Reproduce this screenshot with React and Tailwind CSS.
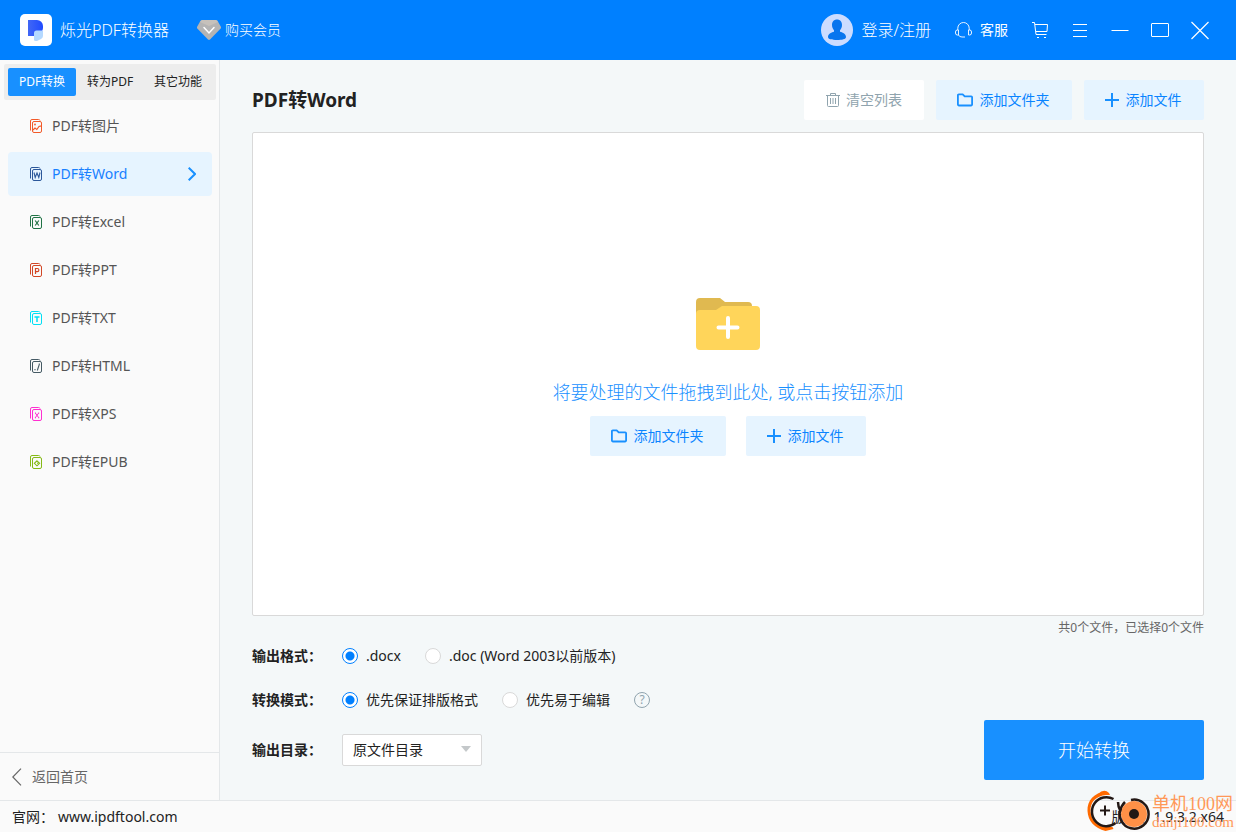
import { useState } from "react";

const NAV = [
  { label: "PDF转图片", color: "#f25a29", glyph: "image" },
  { label: "PDF转Word", color: "#2b579a", glyph: "word" },
  { label: "PDF转Excel", color: "#207245", glyph: "excel" },
  { label: "PDF转PPT", color: "#d24726", glyph: "ppt" },
  { label: "PDF转TXT", color: "#00e0f5", glyph: "txt" },
  { label: "PDF转HTML", color: "#455a64", glyph: "html" },
  { label: "PDF转XPS", color: "#ff2fd0", glyph: "xps" },
  { label: "PDF转EPUB", color: "#85b916", glyph: "epub" },
];

const GLYPHS = {
  image: (
    <>
      <circle cx="5" cy="5.500" r="0.9" fill="currentColor" stroke="none" />
      <path d="M3 11l2-2 1.800 1.500L9 7.500l2.500-.7" strokeWidth="1.200" />
    </>
  ),
  word: <path d="M4 5.500l1.200 5 1.800-4.500 1.800 4.500 1.200-5" strokeWidth="1.100" />,
  excel: <path d="M5.200 5.500l3.600 5M8.800 5.500l-3.600 5" strokeWidth="1.200" />,
  ppt: <path d="M5.500 11V5.500h1.800a1.500 1.500 0 0 1 0 3.200H5.500" strokeWidth="1.200" />,
  txt: <path d="M4.500 6h5M7 6v5" strokeWidth="1.500" />,
  html: <path d="M9.300 4.500v1L7.300 11.500M5 10v1.200" strokeWidth="1.100" />,
  xps: <path d="M5 6h1M8.200 6h1M5.300 6l3.500 4.800M8.700 6l-3.500 4.800M5 10.800h1M8.200 10.800h1" />,
  epub: <path d="M7 5.800l2.600 2.500L7 10.800 4.400 8.300zM7 8.300h1.300" strokeWidth="1.100" />,
};

function DocIcon({ glyph, color }) {
  return (
    <svg width="12" height="14" viewBox="0 0 12 14" fill="none" stroke="currentColor" strokeWidth="1" style={{ color }} aria-hidden="true">
      <path d="M.5 11.500V2A1.500 1.500 0 0 1 2 .5h6.500A1.500 1.500 0 0 1 10 1.500" />
      <rect x="2.500" y="2.500" width="9" height="11" rx="1.500" />
      {GLYPHS[glyph]}
    </svg>
  );
}

function FolderIcon() {
  return (
    <svg width="16" height="14" viewBox="0 0 16 14" fill="none" stroke="#1890ff" strokeWidth="1.800" strokeLinejoin="round" aria-hidden="true">
      <path d="M.9 11.600V2.200q0-.9.9-.9h3.900l2 2h6.500q.9 0 .9.900v7.400q0 .9-.9.900H1.800q-.9 0-.9-.9z" />
    </svg>
  );
}

function PlusIcon() {
  return (
    <svg width="14" height="14" viewBox="0 0 14 14" stroke="#1890ff" strokeWidth="2" aria-hidden="true">
      <path d="M7 0v14M0 7h14" />
    </svg>
  );
}

function AddButtons({ gap }) {
  const base = "flex h-10 items-center justify-center rounded-xs bg-[#e6f4ff] pr-0.5 text-sm text-[#0a84ff]";
  return (
    <div className={`flex ${gap}`}>
      <button type="button" className={`${base} w-34 gap-[7px]`}>
        <FolderIcon />
        添加文件夹
      </button>
      <button type="button" className={`${base} w-30 gap-[7px]`}>
        <PlusIcon />
        添加文件
      </button>
    </div>
  );
}

function TitleBar() {
  return (
    <header className="flex h-15 shrink-0 items-center bg-[#0080ff] pr-7 pl-5 font-light text-white">
      <svg width="32" height="32" viewBox="0 0 32 32" aria-hidden="true">
        <defs>
          <linearGradient id="mark" x1="0" y1="0" x2="1" y2="0">
            <stop offset="0" stopColor="#4167f5" />
            <stop offset="1" stopColor="#1f4bff" />
          </linearGradient>
        </defs>
        <rect width="32" height="32" rx="5" fill="#fff" />
        <path d="M8 6h9a6 6 0 0 1 6 6v2a6 6 0 0 1-6 6l-3 2H8z" fill="url(#mark)" />
        <path d="M14 26v-7q0-2.500 2.500-2.500H23v5.500q0 2-2 3l-3 1.500q-1 .5-2 .5-2 0-2-1z" fill="#b5d9ff" />
      </svg>
      <h1 className="ml-2 text-base font-light">烁光PDF转换器</h1>
      <button type="button" className="ml-7 flex items-center gap-1 text-sm">
        <svg width="24" height="20" viewBox="0 0 24 20" aria-hidden="true">
          <path d="M5 0h14q1 0 1.500.8L24 7q.3.800-.3 1.500L13 19.500q-1 .8-2 0L.3 8.500Q-.3 7.800 0 7L3.500.8Q4 0 5 0z" fill="#b4b4b4" />
          <path d="M5 0h14l2 2-9 4-9-4z" fill="#c6c1bb" />
          <path d="M7 7.500l5 5.500 5-5.500" fill="none" stroke="#fff" strokeWidth="1.500" strokeLinecap="round" />
        </svg>
        购买会员
      </button>
      <div className="ml-auto flex items-center">
        <button type="button" className="flex items-center gap-2 text-base">
          <svg width="32" height="32" viewBox="0 0 32 32" aria-hidden="true">
            <circle cx="16" cy="16" r="16" fill="#ccdcff" />
            <path d="M16 5.500c3 0 5 2.200 5 5.500 0 2.500-1 4-2 5.200v1.600c3 .9 6 2.200 6 5.200 0 2.300-4 3-9 3s-9-.7-9-3c0-3 3-4.300 6-5.200v-1.600c-1-1.200-2-2.700-2-5.200 0-3.300 2-5.500 5-5.500z" fill="#0875ee" />
          </svg>
          登录/注册
        </button>
        <button type="button" className="ml-6 flex items-center gap-2 text-sm font-normal">
          <svg width="17" height="16" viewBox="0 0 17 16" fill="none" stroke="#fff" strokeWidth="0.900" aria-hidden="true">
            <path d="M2.800 8V6.200a5.700 5.700 0 0 1 11.400 0V8M3.500 8H2.300Q.5 8 .5 10v1q0 2 1.800 2h1.200zM13.500 8h1.200q1.800 0 1.800 2v1q0 2-1.800 2h-1.200zM3.500 13q.8 2 3.500 2h3" />
          </svg>
          客服
        </button>
        <div className="ml-6 flex items-center gap-6">
          <button type="button" aria-label="购物车">
            <svg width="16" height="16" viewBox="0 0 16 16" fill="none" stroke="#fff" aria-hidden="true">
              <path d="M0 .5h2.500l1.500 12h10.500M3 2.500h12.500l-.5 7H4M5 15.500h2M12 15.500h2" />
            </svg>
          </button>
          <button type="button" aria-label="菜单">
            <svg width="16" height="16" viewBox="0 0 16 16" stroke="#fff" aria-hidden="true">
              <path d="M1 2.500h14M1 8.500h14M1 14.500h14" />
            </svg>
          </button>
          <button type="button" aria-label="最小化">
            <svg width="16" height="16" viewBox="0 0 16 16" stroke="#fff" className="overflow-visible" aria-hidden="true">
              <path d="M-.5 8.500h17" />
            </svg>
          </button>
          <button type="button" aria-label="最大化">
            <svg width="16" height="16" viewBox="0 0 16 16" fill="none" stroke="#fff" className="overflow-visible" aria-hidden="true">
              <rect x="-.5" y="1.500" width="17" height="13" rx=".5" />
            </svg>
          </button>
          <button type="button" aria-label="关闭">
            <svg width="16" height="16" viewBox="0 0 16 16" stroke="#fff" strokeWidth="1.200" className="overflow-visible" aria-hidden="true">
              <path d="M-.5 0l17 17M16.500 0l-17 17" />
            </svg>
          </button>
        </div>
      </div>
    </header>
  );
}

function Sidebar({ active, onSelect }) {
  return (
    <aside className="flex w-55 shrink-0 flex-col border-r border-[#e4e7e9] bg-[#fafafa]">
      <div className="mt-1 mr-[3px] ml-1 flex h-9 rounded-xs bg-[#ededed] p-1 text-xs text-[#222]">
        <button type="button" className="w-17 rounded-xs bg-[#1890ff] text-white">PDF转换</button>
        <button type="button" className="w-17">转为PDF</button>
        <button type="button" className="w-17">其它功能</button>
      </div>
      <nav className="mt-1 flex flex-col gap-1 pr-[7px] pl-2">
        {NAV.map((item, i) => (
          <button
            key={item.label}
            type="button"
            onClick={() => onSelect(i)}
            className={`flex h-11 items-center rounded-sm pr-4 pl-[22px] text-sm ${i === active ? "bg-[#e6f4ff] text-[#1880ff]" : "text-[#555]"}`}
          >
            <DocIcon glyph={item.glyph} color={item.color} />
            <span className="ml-2.5">{item.label}</span>
            {i === active && (
              <svg width="8" height="14" viewBox="0 0 8 14" fill="none" stroke="#1890ff" strokeWidth="2" className="ml-auto" aria-hidden="true">
                <path d="M.7.700L7 7 .7 13.300" />
              </svg>
            )}
          </button>
        ))}
      </nav>
      <button type="button" className="mt-auto flex h-12 items-center gap-2.5 border-t border-[#e4e7e9] pl-3 text-sm text-[#666]">
        <svg width="10" height="18" viewBox="0 0 10 18" fill="none" stroke="#666" strokeWidth="1.200" aria-hidden="true">
          <path d="M9 .7L.8 9 9 17.300" />
        </svg>
        返回首页
      </button>
    </aside>
  );
}

function Radio({ name, label, defaultChecked }) {
  return (
    <label className="flex items-center gap-2">
      <input
        type="radio"
        name={name}
        defaultChecked={defaultChecked}
        className="size-4 appearance-none rounded-full border border-[#d9d9d9] bg-white checked:border-[#0080ff] checked:bg-[radial-gradient(circle,#0080ff_4px,white_5px)]"
      />
      {label}
    </label>
  );
}

function Watermark() {
  return (
    <div className="absolute right-0.5 bottom-0 flex items-end">
      <svg width="66" height="42" viewBox="0 0 66 42" fill="none" aria-hidden="true">
        <path d="M20 2C8 2 1 11 1.500 21s7 17 18 20l8-2-1-2C13 37 5 31 4.500 21.500 4 12 10 6 20 5z" fill="#ff6a00" />
        <path d="M12 4q6-6 11-1l1 2H13z" fill="#ff6a00" />
        <path d="M27.500 9a14.500 14.500 0 1 0 2 24M32 12q0 5 2.500 9M39 12q-4 4-4.500 9" stroke="#231815" strokeWidth="2.500" />
        <path d="M14 20.500h10M19 15.500v10" stroke="#231815" strokeWidth="2" />
        <circle cx="48" cy="24" r="13" fill="#ff9047" />
        <path d="M45 10a14.500 14.500 0 1 1-10 8" stroke="#231815" strokeWidth="2.500" />
        <circle cx="48" cy="24" r="5" fill="#231815" />
      </svg>
      <div className="pb-0.5 font-['Liberation_Serif','Noto_Sans_CJK_SC',serif] whitespace-nowrap text-[#ff9858]">
        <p className="text-lg leading-5">单机100网</p>
        <p className="text-[15px] leading-4">danji100.com</p>
      </div>
    </div>
  );
}

export default function App() {
  const [active, setActive] = useState(1);
  return (
    <div className="flex min-h-screen flex-col bg-[#f4f8f9] font-['Noto_Sans','Noto_Sans_CJK_SC',sans-serif] text-[#222]">
      <TitleBar />
      <div className="flex flex-1">
        <Sidebar active={active} onSelect={setActive} />
        <main className="flex min-w-0 flex-1 flex-col px-8 pt-5 pb-5">
          <div className="flex items-center gap-3">
            <h2 className="mr-auto text-[19px] leading-7 font-bold">PDF转Word</h2>
            <button type="button" className="flex h-10 w-30 items-center justify-center gap-1.5 rounded-xs bg-white text-sm text-[#90a4ae]">
              <svg width="14" height="14" viewBox="0 0 14 14" fill="none" stroke="#90a4ae" aria-hidden="true">
                <path d="M0 2.500h14M4.500 2.500v-2h5v2M1.500 3v9.500q0 1 1 1h9q1 0 1-1V3M4.500 5v6M7 5v6M9.500 5v6" />
              </svg>
              清空列表
            </button>
            <AddButtons gap="gap-3" />
          </div>
          <section className="mt-3 flex flex-1 flex-col items-center justify-center rounded-xs border border-[#d9d9d9] bg-white pt-1.5">
            <svg width="64" height="52" viewBox="0 0 64 52" aria-hidden="true">
              <path d="M0 18V4q0-4 4-4h20l5 4h23q4 0 4 4v10z" fill="#e0b950" />
              <path d="M0 16q0-4 4-4h16l6-4h34q4 0 4 4v36q0 4-4 4H4q-4 0-4-4z" fill="#ffd55a" />
              <path d="M32 20v19M22.500 29.500h19" stroke="#fff" strokeWidth="4" strokeLinecap="round" />
            </svg>
            <p className="mt-7 mb-2.5 text-lg font-light text-[#1890ff]">将要处理的文件拖拽到此处, 或点击按钮添加</p>
            <AddButtons gap="gap-5" />
          </section>
          <p className="mt-1 text-right text-xs text-[#666]">共0个文件，已选择0个文件</p>
          <div className="flex items-end justify-between">
            <div className="mb-3.5 flex flex-col text-sm">
              <div className="mt-2 flex h-6 items-center">
                <span className="w-[90px] font-bold">输出格式：</span>
                <div className="flex gap-6">
                  <Radio name="format" label=".docx" defaultChecked />
                  <Radio name="format" label=".doc (Word 2003以前版本)" />
                </div>
              </div>
              <div className="mt-5 flex h-6 items-center">
                <span className="w-[90px] font-bold">转换模式：</span>
                <div className="flex items-center gap-6">
                  <Radio name="mode" label="优先保证排版格式" defaultChecked />
                  <Radio name="mode" label="优先易于编辑" />
                  <button type="button" aria-label="帮助" className="flex size-4 items-center justify-center rounded-full border border-[#90a4ae] text-xs text-[#90a4ae]">
                    ?
                  </button>
                </div>
              </div>
              <div className="mt-[22px] flex h-8 items-center">
                <label htmlFor="dir" className="w-[90px] font-bold">输出目录：</label>
                <div className="relative">
                  <select id="dir" className="h-8 w-35 appearance-none rounded-xs border border-[#d9d9d9] bg-white pl-2.5">
                    <option>原文件目录</option>
                  </select>
                  <svg width="10" height="6" viewBox="0 0 10 6" className="pointer-events-none absolute top-3 right-[11px]" aria-hidden="true">
                    <path d="M0 0h10L5 6z" fill="#c4c8ca" />
                  </svg>
                </div>
              </div>
            </div>
            <button type="button" className="h-15 w-55 rounded-xs bg-[#1890ff] text-lg font-light text-white">开始转换</button>
          </div>
        </main>
      </div>
      <footer className="relative flex h-8 shrink-0 items-center border-t border-[#e4e7e9] bg-[#fafafa] px-3 text-sm">
        <span>官网：</span>
        <a href="http://www.ipdftool.com" className="ml-1">www.ipdftool.com</a>
        <span className="ml-auto">版本：1.9.3.2.x64</span>
        <Watermark />
      </footer>
    </div>
  );
}
